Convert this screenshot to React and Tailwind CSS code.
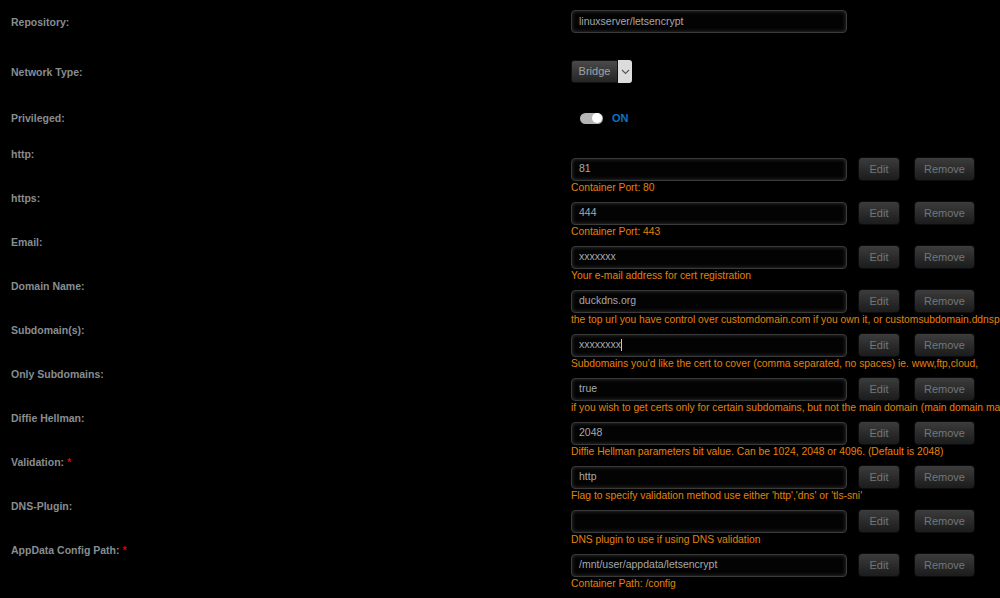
import React from "react";

const rows = [
  { label: "http:", value: "81", desc: "Container Port: 80" },
  { label: "https:", value: "444", desc: "Container Port: 443" },
  { label: "Email:", value: "xxxxxxx", desc: "Your e-mail address for cert registration" },
  { label: "Domain Name:", value: "duckdns.org", desc: "the top url you have control over customdomain.com if you own it, or customsubdomain.ddnsprovider.com if dynamic dns" },
  { label: "Subdomain(s):", value: "xxxxxxxx", desc: "Subdomains you'd like the cert to cover (comma separated, no spaces) ie. www,ftp,cloud,", caret: true },
  { label: "Only Subdomains:", value: "true", desc: "if you wish to get certs only for certain subdomains, but not the main domain (main domain may be hosted on another machine and cannot be validated)" },
  { label: "Diffie Hellman:", value: "2048", desc: "Diffie Hellman parameters bit value. Can be 1024, 2048 or 4096. (Default is 2048)" },
  { label: "Validation:", req: true, value: "http", desc: "Flag to specify validation method use either 'http','dns' or 'tls-sni'" },
  { label: "DNS-Plugin:", value: "", desc: "DNS plugin to use if using DNS validation" },
  { label: "AppData Config Path:", req: true, value: "/mnt/user/appdata/letsencrypt", desc: "Container Path: /config" },
];

function Label({ children, req }) {
  return (
    <div className="w-[560px] shrink-0 pl-[11px] font-bold text-[10.5px] leading-[14px] text-[#878d92]">
      {children}
      {req && <span className="text-[#e00000]"> *</span>}
    </div>
  );
}

function TextInput({ value, caret }) {
  return (
    <div className="w-[276px] h-[23px] rounded-[4px] border border-[#3a3a3a] bg-[#030303] shadow-[inset_0_0_4px_rgba(100,100,100,0.55)] flex items-center pl-[7px] text-[10.5px] text-[#a3a9ad]">
      <span>{value}</span>
      {caret && <span className="inline-block w-px h-[12px] bg-[#c8c8c8]" />}
    </div>
  );
}

function Btn({ children, w }) {
  return (
    <div
      className={`${w} h-[24px] rounded-[4px] bg-gradient-to-b from-[#3c3c3c] to-[#1c1c1c] border border-[#0d0d0d] flex items-center justify-center text-[11px] text-[#72777b]`}
    >
      {children}
    </div>
  );
}

export default function App() {
  return (
    <div
      className="w-[1000px] h-[598px] bg-black overflow-hidden"
      style={{ fontFamily: '"Liberation Sans", Arial, sans-serif' }}
    >
      <div className="flex items-center h-[23px] mt-[10px]">
        <Label>Repository:</Label>
        <div className="pl-[11px]">
          <TextInput value="linuxserver/letsencrypt" />
        </div>
      </div>

      <div className="flex items-center h-[23px] mt-[27px]">
        <Label>Network Type:</Label>
        <div className="pl-[11px] flex">
          <div className="h-[23px] w-[47px] rounded-l-[3px] bg-gradient-to-b from-[#4a4a4a] to-[#252525] border border-[#111] flex items-center justify-center text-[11px] text-[#a0a4a8]">
            Bridge
          </div>
          <div className="h-[23px] w-[14px] rounded-r-[3px] bg-[#dcdcdc] flex items-center justify-center">
            <svg width="9" height="6" viewBox="0 0 9 6">
              <path d="M1 1 L4.5 4.5 L8 1" fill="none" stroke="#555" strokeWidth="1.1" />
            </svg>
          </div>
        </div>
      </div>

      <div className="flex items-center h-[22px] mt-[24px]">
        <Label>Privileged:</Label>
        <div className="pl-[20px] flex items-center gap-[9px]">
          <div className="w-[23px] h-[11px] rounded-full bg-[#b5b5b5] flex items-center justify-end pr-[1px]">
            <div className="w-[10px] h-[10px] rounded-full bg-white" />
          </div>
          <span className="text-[11px] font-bold text-[#0a74c4]">ON</span>
        </div>
      </div>

      <div className="mt-[18px]">
        {rows.map((r, i) => (
          <div key={i} className="flex h-[44px]">
            <Label req={r.req}>{r.label}</Label>
            <div className="pl-[11px] pt-[10px] flex flex-col">
              <div className="flex items-center">
                <TextInput value={r.value} caret={r.caret} />
                <div className="ml-[11px]">
                  <Btn w="w-[42px]">Edit</Btn>
                </div>
                <div className="ml-[14px]">
                  <Btn w="w-[61px]">Remove</Btn>
                </div>
              </div>
              <div className="text-[10.3px] leading-[13px] text-[#e3830a] whitespace-nowrap">
                {r.desc}
              </div>
            </div>
          </div>
        ))}
      </div>
    </div>
  );
}
